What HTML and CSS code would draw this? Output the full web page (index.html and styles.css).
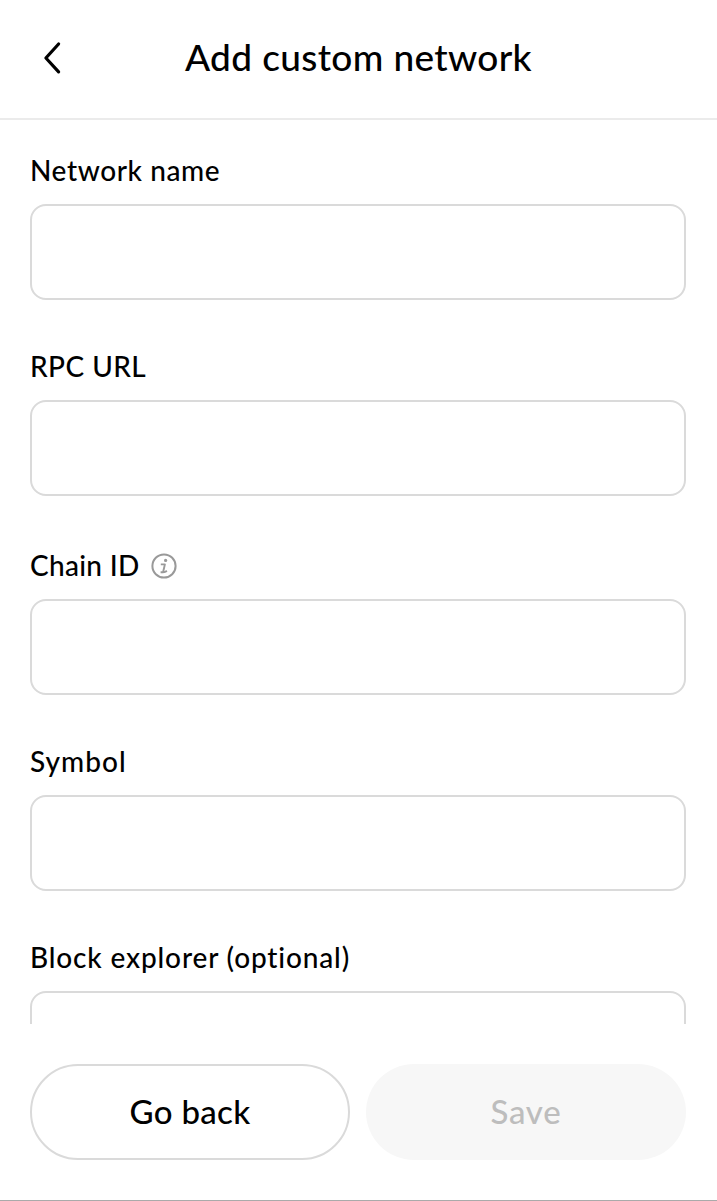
FILE: index.html
```
<!DOCTYPE html>
<html lang="en">
<head>
<meta charset="utf-8">
<title>Add custom network</title>
<link rel="stylesheet" href="styles.css">
</head>
<body>
<div class="screen">
  <header class="header">
    <button class="back" aria-label="Back">
      <svg width="24" height="36" viewBox="0 0 24 36" fill="none" stroke="#000" stroke-width="3.2" stroke-linecap="round" stroke-linejoin="round"><path d="M18.6 4 5.9 18 18.6 31.8"/></svg>
    </button>
    <h1 class="title">Add custom network</h1>
  </header>
  <main class="form">
    <div class="field">
      <label class="label label-name" for="name">Network name</label>
      <input class="input" id="name">
    </div>
    <div class="field">
      <label class="label label-rpc" for="rpc">RPC URL</label>
      <input class="input" id="rpc">
    </div>
    <div class="field field-chain">
      <div class="label-row">
        <label class="label label-chain" for="chain">Chain ID</label>
        <svg class="info" width="26" height="26" viewBox="0 0 26 26"><circle cx="13" cy="13" r="11.6" fill="none" stroke="#999" stroke-width="2"/><circle cx="14.6" cy="7.4" r="1.6" fill="#999"/><path d="M9.8 11.4h4.1L12.4 17.8q-.3 1.6 1 1.3 1.2-.3 2.5-1.2M9.6 19.2h3" fill="none" stroke="#999" stroke-width="1.9" stroke-linejoin="round"/></svg>
      </div>
      <input class="input" id="chain">
    </div>
    <div class="field">
      <label class="label label-symbol" for="symbol">Symbol</label>
      <input class="input" id="symbol">
    </div>
    <div class="field">
      <label class="label label-explorer" for="explorer">Block explorer (optional)</label>
      <input class="input" id="explorer">
    </div>
  </main>
  <footer class="footer">
    <button class="button button-back">Go back</button>
    <button class="button button-save" disabled>Save</button>
  </footer>
</div>
</body>
</html>
```
FILE: styles.css
```
* { box-sizing: border-box; }
body {
  margin: 0;
  background: #fff;
  color: #000;
  font-family: Lato, "Open Sans", sans-serif;
  font-weight: 500;
  font-variant-ligatures: none;
}
.screen {
  display: flex;
  flex-direction: column;
  height: 1201px;
  overflow: hidden;
  border-bottom: 1px solid #aaa;
}
.header {
  display: grid;
  grid-template-columns: 80px 1fr 80px;
  align-items: center;
  height: 120px;
  flex: none;
  padding-bottom: 2px;
  border-bottom: 2px solid #ebebeb;
}
.back {
  display: flex;
  justify-content: flex-end;
  padding: 0 16px 0 0;
  border: 0;
  background: none;
}
.title {
  margin: 0;
  padding-bottom: 2px;
  text-align: center;
  font-size: 37px;
  font-weight: 500;
  line-height: 48px;
  letter-spacing: 0.36px;
}
.form {
  flex: none;
  height: 904px;
  overflow: hidden;
  padding: 32px 31px 0 30px;
}
.field {
  display: flex;
  flex-direction: column;
  gap: 15px;
  margin-bottom: 48px;
}
.field-chain { padding-top: 3px; }
.label-row {
  display: flex;
  align-items: center;
  gap: 11px;
  height: 37px;
}
.label {
  height: 37px;
  font-size: 28px;
  line-height: 37px;
  white-space: nowrap;
}
.label-name { letter-spacing: 0.6px; }
.label-rpc { letter-spacing: 0.45px; }
.label-chain { letter-spacing: 0.3px; }
.label-symbol { letter-spacing: 1.05px; }
.label-explorer { letter-spacing: 0.85px; }
.input {
  width: 100%;
  height: 96px;
  padding: 0 24px;
  border: 2px solid #dadada;
  border-radius: 16px;
  background: #fff;
  font: inherit;
  font-size: 28px;
  outline: none;
}
.footer {
  display: grid;
  grid-template-columns: 320px 320px;
  gap: 16px;
  padding: 40px 31px 40px 30px;
}
.button {
  height: 96px;
  padding: 0 0 3px;
  border: 0;
  border-radius: 48px;
  font: inherit;
  font-size: 33px;
}
.button-back {
  border: 2px solid #dadada;
  background: #fff;
  color: #000;
  letter-spacing: 0.3px;
}
.button-save {
  background: #f7f7f7;
  color: #bdbdbd;
  letter-spacing: 0.8px;
}
```
